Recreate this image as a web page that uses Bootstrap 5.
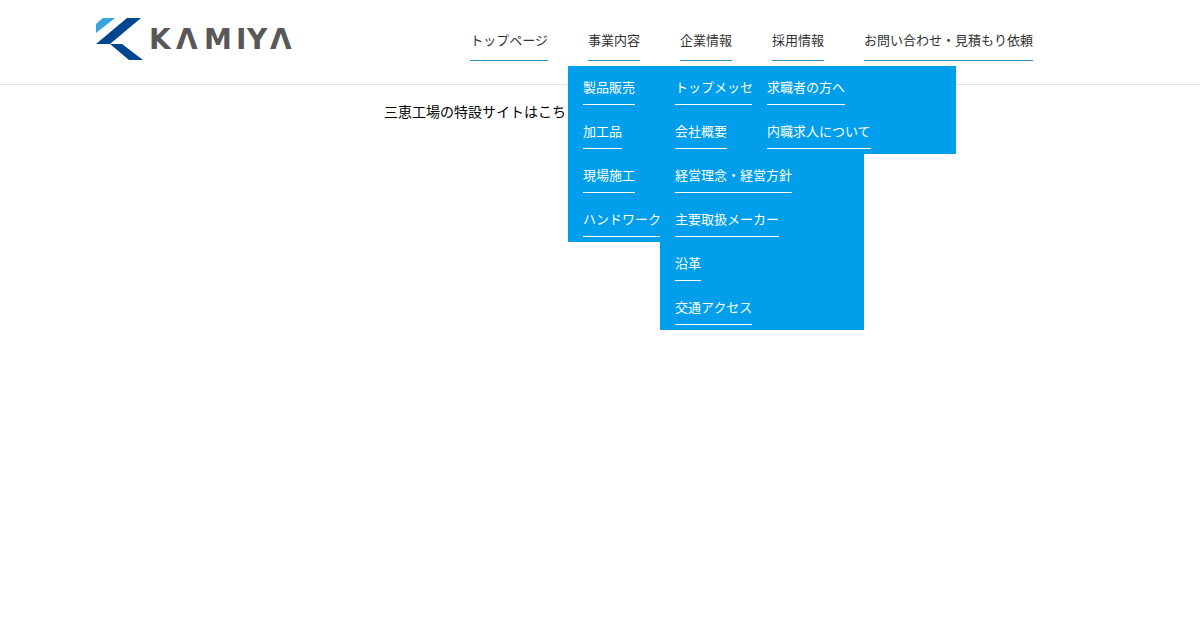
<!DOCTYPE html>
<html lang="ja">
<head>
<meta charset="utf-8">
<meta name="viewport" content="width=device-width, initial-scale=1">
<title>KAMIYA</title>
<link href="https://cdn.jsdelivr.net/npm/bootstrap@5.3.0/dist/css/bootstrap.min.css" rel="stylesheet">
<style>
body { font-family: "Noto Sans CJK JP", sans-serif; font-size: 14px; line-height: 20px; color: #000; }
.site-header { padding: 0 8%; min-height: 85px; border-bottom: 1px solid #e5e5e5; }
.site-logo { margin-top: 17px; }
.site-menu { margin-top: 30px; margin-right: 51px; font-size: 13px; }
.site-menu a { display: inline-block; white-space: nowrap; text-decoration: none; }
.menu-item { padding: 0 20px; }
.menu-link { color: #333; padding-bottom: 10px; border-bottom: 1px solid #2a8fbd; }
.sub-menu { top: 36px; left: 0; width: 204px; background: #009eeb; z-index: 10; }
.sub-menu li { height: 44px; padding: 11px 15px 0; }
.sub-menu a { color: #fff; padding-bottom: 7px; border-bottom: 1px solid #fff; }
.notice { width: 36%; margin: 16px auto 0; }
</style>
</head>
<body class="min-vh-100">
<header class="site-header d-flex justify-content-between align-items-start">
  <a href="#" class="site-logo" aria-label="KAMIYA">
    <svg class="d-block" width="198" height="44" viewBox="0 0 198 44" role="img" aria-label="KAMIYA">
      <path fill="#36a5dc" d="M7 1H19L0 16V7Z"/>
      <path fill="#00458f" d="M31 1H45L14 27H0Z"/>
      <path fill="#00458f" d="M14 27H26L47 43H33Z"/>
      <text y="32" x="53 80 108 140 151 174" font-family="DejaVu Sans, sans-serif" font-size="28" font-weight="700" fill="#595757">KΛMIYΛ</text>
    </svg>
  </a>
  <nav class="site-menu" aria-label="メインメニュー">
    <ul class="list-unstyled d-flex mb-0">
      <li class="menu-item position-relative"><a class="menu-link" href="#">トップページ</a></li>
      <li class="menu-item position-relative"><a class="menu-link" href="#">事業内容</a>
        <ul class="sub-menu list-unstyled position-absolute">
          <li><a href="#">製品販売</a></li>
          <li><a href="#">加工品</a></li>
          <li><a href="#">現場施工</a></li>
          <li><a href="#">ハンドワーク</a></li>
        </ul>
      </li>
      <li class="menu-item position-relative"><a class="menu-link" href="#">企業情報</a>
        <ul class="sub-menu list-unstyled position-absolute">
          <li><a href="#">トップメッセージ</a></li>
          <li><a href="#">会社概要</a></li>
          <li><a href="#">経営理念・経営方針</a></li>
          <li><a href="#">主要取扱メーカー</a></li>
          <li><a href="#">沿革</a></li>
          <li><a href="#">交通アクセス</a></li>
        </ul>
      </li>
      <li class="menu-item position-relative"><a class="menu-link" href="#">採用情報</a>
        <ul class="sub-menu list-unstyled position-absolute">
          <li><a href="#">求職者の方へ</a></li>
          <li><a href="#">内職求人について</a></li>
        </ul>
      </li>
      <li class="menu-item position-relative"><a class="menu-link" href="#">お問い合わせ・見積もり依頼</a></li>
    </ul>
  </nav>
</header>
<main>
  <p class="notice">三恵工場の特設サイトはこちら</p>
</main>
<script src="https://cdn.jsdelivr.net/npm/bootstrap@5.3.0/dist/js/bootstrap.bundle.min.js"></script>
</body>
</html>
